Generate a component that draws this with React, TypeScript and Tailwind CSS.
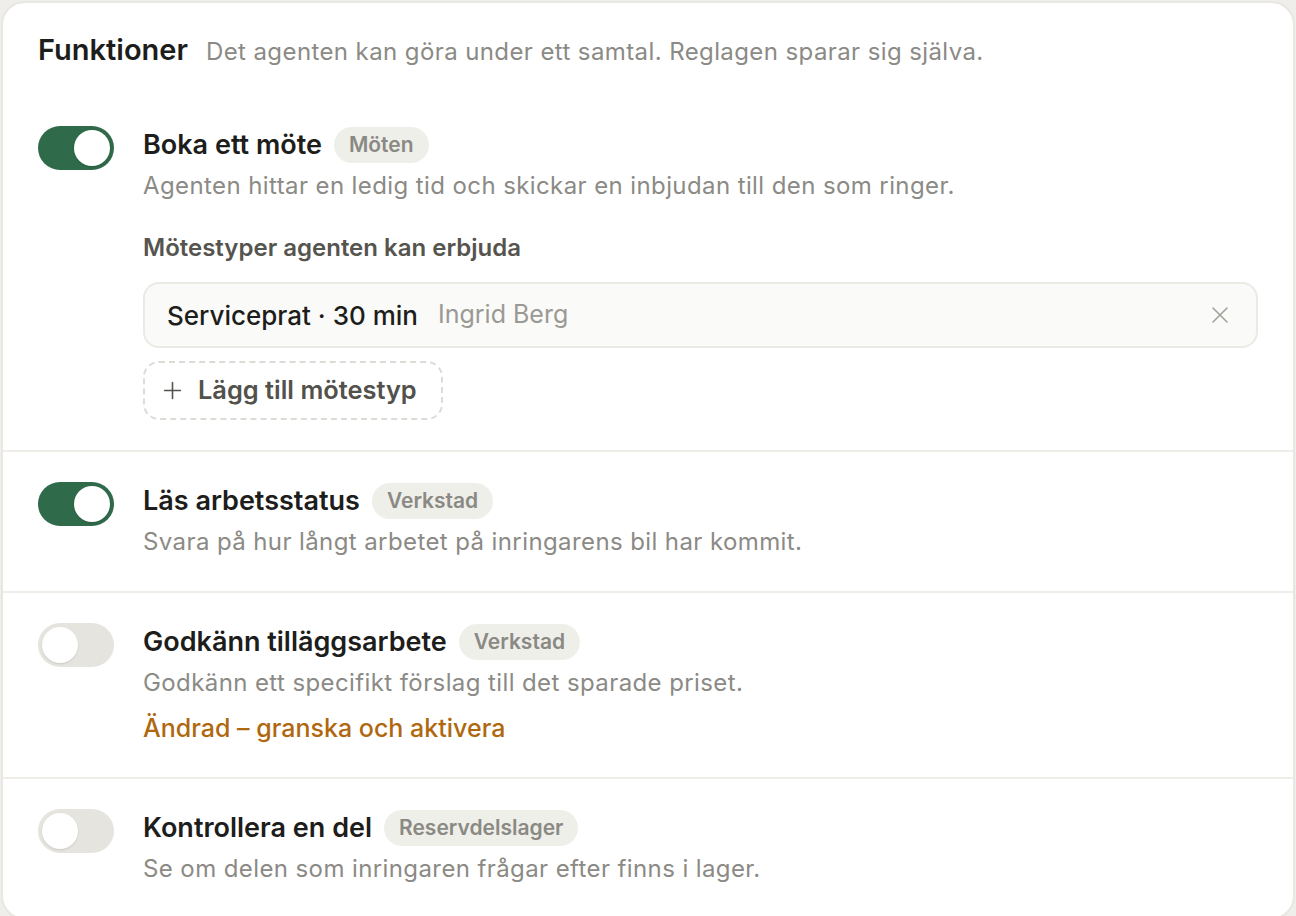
import { Plus, X } from 'lucide-react';

function Toggle({ on }: { on: boolean }) {
  return (
    <div
      className={
        on
          ? 'flex h-[44px] w-[76px] shrink-0 items-center justify-end rounded-full bg-[#2f6a4a] p-[4px]'
          : 'flex h-[44px] w-[76px] shrink-0 items-center justify-start rounded-full bg-[#e5e4df] p-[4px]'
      }
    >
      <div className="h-[36px] w-[36px] rounded-full bg-white shadow-[0_1px_2px_rgba(0,0,0,0.12)]" />
    </div>
  );
}

function Badge({ children }: { children: string }) {
  return (
    <span className="inline-flex h-[36px] items-center rounded-full bg-[#efefea] px-[15px] text-[21px] font-semibold text-[#8a8984]">
      {children}
    </span>
  );
}

function Row({
  on,
  title,
  badge,
  desc,
  children,
  pad,
  last,
}: {
  on: boolean;
  title: string;
  badge: string;
  desc: string;
  children?: React.ReactNode;
  pad: string;
  last?: boolean;
}) {
  return (
    <div className={(last ? '' : 'border-b-2 border-[#eeede8] ') + 'flex gap-[29px] px-[35px] ' + pad}>
      <Toggle on={on} />
      <div className="flex min-w-0 flex-1 flex-col">
        <div className="mt-[1px] flex h-[36px] items-center gap-[12px]">
          <span className="text-[27px] font-semibold text-[#1d1d1b]">{title}</span>
          <Badge>{badge}</Badge>
        </div>
        <p className="mt-[8px] text-[24px] leading-[30px] tracking-[0.4px] text-[#8b8a85]">{desc}</p>
        {children}
      </div>
    </div>
  );
}

export default function App() {
  return (
    <div className="min-h-screen bg-[#efeeea] p-[1px] font-['Inter',sans-serif]">
      <div className="overflow-hidden rounded-[24px] border-2 border-[#e8e7e2] bg-white">
        <div className="flex items-baseline gap-[18px] px-[35px] pt-[29px] pb-[25px]">
          <h2 className="text-[29px] font-semibold leading-[36px] text-[#1d1d1b]">Funktioner</h2>
          <span className="text-[24px] tracking-[0.4px] text-[#8b8a85]">
            Det agenten kan göra under ett samtal. Reglagen sparar sig själva.
          </span>
        </div>

        <Row
          on
          title="Boka ett möte"
          badge="Möten"
          desc="Agenten hittar en ledig tid och skickar en inbjudan till den som ringer."
          pad="pt-[31px] pb-[30px]"
        >
          <div className="mt-[32px] text-[24px] font-semibold leading-[30px] text-[#55544f]">
            Mötestyper agenten kan erbjuda
          </div>
          <div className="mt-[19px] flex h-[66px] items-center rounded-[16px] border-2 border-[#ebeae5] bg-[#fafaf8] pl-[22px] pr-[22px]">
            <span className="text-[26px] font-medium text-[#1d1d1b]">Serviceprat · 30 min</span>
            <span className="ml-[20px] text-[25px] text-[#9a9994]">Ingrid Berg</span>
            <X className="ml-auto h-[28px] w-[28px] text-[#a3a29d]" strokeWidth={1.4} />
          </div>
          <div className="mt-[13px] flex">
            <button className="flex h-[59px] items-center gap-[12px] rounded-[16px] border-2 border-dashed border-[#dcdbd6] pl-[14px] pr-[24px] text-[25.4px] font-semibold text-[#52514c]">
              <Plus className="h-[27px] w-[27px]" strokeWidth={1.4} />
              Lägg till mötestyp
            </button>
          </div>
        </Row>

        <Row
          on
          title="Läs arbetsstatus"
          badge="Verkstad"
          desc="Svara på hur långt arbetet på inringarens bil har kommit."
          pad="pt-[30px] pb-[34px]"
        />

        <Row
          on={false}
          title="Godkänn tilläggsarbete"
          badge="Verkstad"
          desc="Godkänn ett specifikt förslag till det sparade priset."
          pad="pt-[30px] pb-[34px]"
        >
          <div className="mt-[15px] text-[25px] font-medium leading-[30px] text-[#b0680f]">
            Ändrad – granska och aktivera
          </div>
        </Row>

        <Row
          on={false}
          title="Kontrollera en del"
          badge="Reservdelslager"
          desc="Se om delen som inringaren frågar efter finns i lager."
          pad="pt-[30px] pb-[34px]"
          last
        />
      </div>
    </div>
  );
}
